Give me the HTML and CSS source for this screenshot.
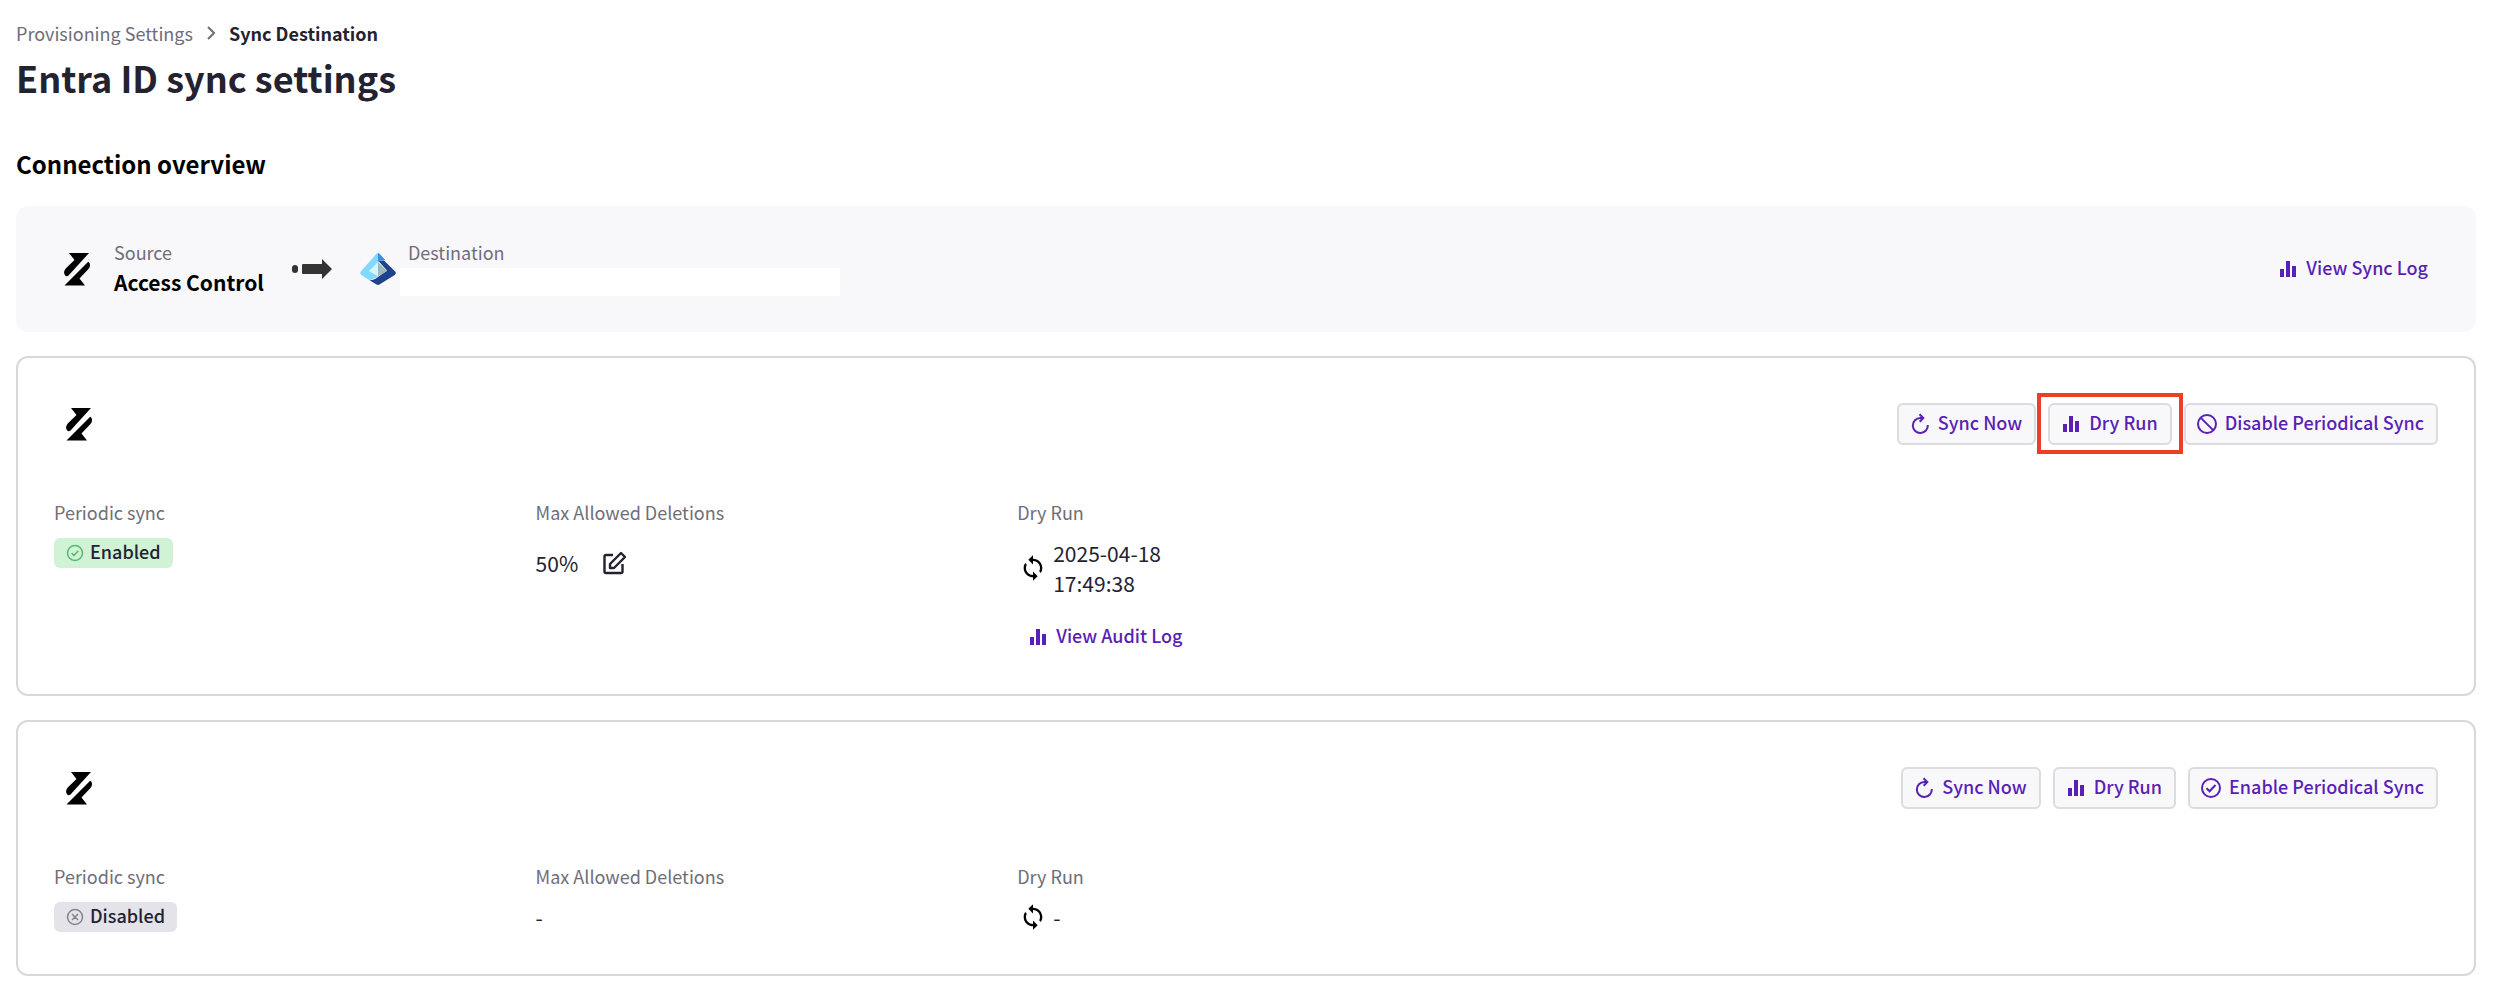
FILE: index.html
```
<!DOCTYPE html>
<html lang="en">
<head>
    <meta charset="UTF-8">
    <meta name="viewport" content="width=device-width, initial-scale=1.0">
    <title>Entra ID sync settings</title>
    <link rel="stylesheet" href="styles.css">
</head>
<body>
    <!-- Shared icons -->
    <svg class="icon-defs" aria-hidden="true">
        <symbol id="logo" viewBox="0 0 26 33">
            <path d="M5 0H25L4.500 22.500C2 25-.5 21 .2 18.500C.6 17 1.500 15.800 2.500 14.800L10.500 7Z"/>
            <path d="M24.200 8.800C25.300 9.200 26 10.500 26 12C26 13.800 25.300 15.200 24 16.500L15.500 25.500L21 32.500H.5Z"/>
        </symbol>
        <symbol id="bars" viewBox="0 0 24 24">
            <path d="M4 12h4v8H4zM10 4h4v16h-4zM16 9h4v11h-4z"/>
        </symbol>
        <symbol id="refresh" viewBox="0 0 24 24">
            <path d="M14 6H12.300A7.500 7.500 0 1 0 19.800 13" fill="none" stroke="currentColor" stroke-width="2"/>
            <path d="M11.500 2.200L15.300 6L11.700 9.800" fill="none" stroke="currentColor" stroke-width="2"/>
        </symbol>
        <symbol id="block" viewBox="0 0 24 24">
            <path d="M12 3a9 9 0 1 0 0 18a9 9 0 1 0 0-18M5.600 5.600L18.400 18.400" fill="none" stroke="currentColor" stroke-width="2"/>
        </symbol>
        <symbol id="check" viewBox="0 0 24 24">
            <path d="M12 3a9 9 0 1 0 0 18a9 9 0 1 0 0-18M7.500 12.200L10.600 15.300L16.500 9" fill="none" stroke="currentColor" stroke-width="2"/>
        </symbol>
        <symbol id="enabled" viewBox="0 0 24 24">
            <path d="M12 2a10 10 0 1 0 0 20a10 10 0 1 0 0-20M7.500 12.200L10.600 15.300L16.500 9" fill="none" stroke="currentColor" stroke-width="2"/>
        </symbol>
        <symbol id="disabled" viewBox="0 0 24 24">
            <path d="M12 2a10 10 0 1 0 0 20a10 10 0 1 0 0-20M8 8L16 16M16 8L8 16" fill="none" stroke="currentColor" stroke-width="2"/>
        </symbol>
        <symbol id="sync" viewBox="0 0 24 24">
            <path d="M12 4V1L8 5l4 4V6c3.310 0 6 2.690 6 6 0 1.010-.25 1.970-.7 2.800l1.460 1.460C19.540 15.030 20 13.570 20 12c0-4.420-3.580-8-8-8zm0 14c-3.310 0-6-2.690-6-6 0-1.010.25-1.970.7-2.800L5.240 7.740C4.460 8.970 4 10.430 4 12c0 4.420 3.580 8 8 8v3l4-4-4-4v3z"/>
        </symbol>
        <symbol id="edit" viewBox="0 0 24 24">
            <path d="M11 4H4Q2.500 4 2.500 5.500V20.500Q2.500 22 4 22H19Q20.500 22 20.500 20.500V13" fill="none" stroke="currentColor" stroke-width="2.400"/>
            <path d="M8 17V13L19 2L23 6L12 17Z" fill="none" stroke="currentColor" stroke-width="2.400" stroke-linejoin="round"/>
        </symbol>
    </svg>

    <nav class="breadcrumbs" aria-label="Breadcrumb">
        <a href="#">Provisioning Settings</a>
        <svg class="chevron" viewBox="0 0 8 14"><path d="M1 1L7 7L1 13"/></svg>
        <span class="current">Sync Destination</span>
    </nav>
    <h1>Entra ID sync settings</h1>

    <main>
        <h2>Connection overview</h2>

        <section class="overview">
            <svg class="logo"><use href="#logo"/></svg>
            <div class="field source">
                <span class="label">Source</span>
                <strong class="name">Access Control</strong>
            </div>
            <svg class="arrow" viewBox="0 0 40 20">
                <rect x="0" y="6" width="6" height="8" rx="3"/>
                <path d="M11 5H30V0L40 10L30 20V15H11Q10 15 10 14V6Q10 5 11 5Z"/>
            </svg>
            <svg class="entra" viewBox="0 0 36 32">
                <path fill="#83d9fd" d="M18 0Q17 0 16.200 1L.8 18.500Q-.6 20.500 1.300 22L9.500 27.300L18 24Z"/>
                <path fill="#1e428c" d="M24 7.500L35.200 18.500Q36.600 20.500 34.700 22L19.500 31.500Q18 32.400 16.500 31.500L9.500 27.300Q13 27.500 16 25.500L27 17.500L18 7.500Z"/>
                <path fill="#3f8fe0" d="M18 0Q19 0 19.800 1L25.500 7.200L20.500 7.200L18 9Z"/>
                <path fill="#d4f4fe" d="M18 9V23.500L9 18Z"/>
                <path fill="#9cb9bd" d="M18 9L27 18L18 23.500Z"/>
            </svg>
            <div class="field destination">
                <span class="label">Destination</span>
                <span class="redacted"></span>
            </div>
            <a href="#" class="link">
                <svg class="icon"><use href="#bars"/></svg>
                <span class="text">View Sync Log</span>
            </a>
        </section>

        <section class="card">
            <div class="card-header">
                <svg class="logo"><use href="#logo"/></svg>
                <div class="buttons">
                    <button class="button">
                        <svg class="icon"><use href="#refresh"/></svg>
                        <span class="text">Sync Now</span>
                    </button>
                    <div class="highlighted">
                        <button class="button">
                            <svg class="icon"><use href="#bars"/></svg>
                            <span class="text">Dry Run</span>
                        </button>
                    </div>
                    <button class="button">
                        <svg class="icon"><use href="#block"/></svg>
                        <span class="text">Disable Periodical Sync</span>
                    </button>
                </div>
            </div>
            <div class="details">
                <div class="detail">
                    <span class="label">Periodic sync</span>
                    <span class="badge enabled">
                        <svg><use href="#enabled"/></svg>
                        <span>Enabled</span>
                    </span>
                </div>
                <div class="detail">
                    <span class="label">Max Allowed Deletions</span>
                    <div class="value editable">
                        <span>50%</span>
                        <button class="edit" aria-label="Edit max allowed deletions">
                            <svg class="icon"><use href="#edit"/></svg>
                        </button>
                    </div>
                </div>
                <div class="detail">
                    <span class="label">Dry Run</span>
                    <div class="value run">
                        <svg class="sync"><use href="#sync"/></svg>
                        <time datetime="2025-04-18T17:49:38">2025-04-18 17:49:38</time>
                    </div>
                    <a href="#" class="link audit">
                        <svg class="icon"><use href="#bars"/></svg>
                        <span class="text">View Audit Log</span>
                    </a>
                </div>
            </div>
        </section>

        <section class="card">
            <div class="card-header">
                <svg class="logo"><use href="#logo"/></svg>
                <div class="buttons">
                    <button class="button">
                        <svg class="icon"><use href="#refresh"/></svg>
                        <span class="text">Sync Now</span>
                    </button>
                    <button class="button">
                        <svg class="icon"><use href="#bars"/></svg>
                        <span class="text">Dry Run</span>
                    </button>
                    <button class="button">
                        <svg class="icon"><use href="#check"/></svg>
                        <span class="text">Enable Periodical Sync</span>
                    </button>
                </div>
            </div>
            <div class="details">
                <div class="detail">
                    <span class="label">Periodic sync</span>
                    <span class="badge disabled">
                        <svg><use href="#disabled"/></svg>
                        <span>Disabled</span>
                    </span>
                </div>
                <div class="detail">
                    <span class="label">Max Allowed Deletions</span>
                    <div class="value">-</div>
                </div>
                <div class="detail">
                    <span class="label">Dry Run</span>
                    <div class="value run">
                        <svg class="sync"><use href="#sync"/></svg>
                        <span>-</span>
                    </div>
                </div>
            </div>
        </section>
    </main>
</body>
</html>
```
FILE: styles.css
```
* {
    box-sizing: border-box;
}

body {
    margin: 0;
    padding: 19px 24px 24px 16px;
    font-family: "Noto Sans CJK SC", "Open Sans", sans-serif;
    font-size: 18px;
    line-height: 28px;
    color: #242230;
    background-color: #fff;
}

h1, h2 {
    margin: 0;
    font-weight: bold;
}

h1 {
    margin-top: 6px;
    font-size: 36px;
    line-height: 48px;
}

h2 {
    margin: 45px 0 24px;
    font-size: 24px;
    line-height: 36px;
    color: #000;
}

a {
    text-decoration: none;
}

svg {
    flex-shrink: 0;
    fill: currentColor;
}

.icon-defs {
    display: none;
}

.icon {
    width: 24px;
    height: 24px;
}

/* Breadcrumbs */
.breadcrumbs {
    display: flex;
    align-items: center;
    gap: 14px;
}

.breadcrumbs a {
    color: #6f6d79;
}

.current {
    font-weight: bold;
}

.chevron {
    width: 8px;
    height: 14px;
    fill: none;
    stroke: #6f6d79;
    stroke-width: 2;
}

/* Connection overview */
.overview {
    display: flex;
    align-items: center;
    padding: 32px 48px;
    border-radius: 12px;
    background-color: #f8f8fb;
}

.logo {
    width: 26px;
    height: 33px;
    color: #000;
}

.label {
    color: #6f6d79;
}

.field {
    display: flex;
    flex-direction: column;
    gap: 2px;
    padding-bottom: 4px;
}

.source {
    margin: 0 28px 0 24px;
}

.name {
    font-size: 21px;
    color: #000;
}

.arrow {
    width: 40px;
    height: 20px;
    color: #333;
}

.entra {
    width: 36px;
    height: 32px;
    margin-left: 28px;
}

.destination {
    margin-left: 4px;
}

.destination .label {
    padding-left: 8px;
}

.redacted {
    width: 440px;
    height: 28px;
    background-color: #fff;
}

.link {
    display: flex;
    align-items: center;
    gap: 6px;
    font-weight: 500;
    color: #5a1fb5;
}

.overview .link {
    margin-left: auto;
}

/* Moves the caption up to sit level with its icon */
.text {
    padding-bottom: 4px;
}

/* Sync cards */
.card {
    margin-top: 24px;
    padding: 45px 36px 42px;
    border: 2px solid #d8d7de;
    border-radius: 12px;
}

.card-header {
    display: flex;
    justify-content: space-between;
    align-items: center;
    padding-left: 12px;
}

.buttons {
    display: flex;
    gap: 12px;
}

.button {
    display: flex;
    align-items: center;
    gap: 6px;
    height: 42px;
    padding: 0 12px 0 9px;
    border: 2px solid #dcdbe0;
    border-radius: 6px;
    font: inherit;
    font-weight: 500;
    color: #5a1fb5;
    background-color: #f8f8fb;
    cursor: pointer;
}

.button:hover {
    background-color: #eeedf5;
}

.highlighted {
    position: relative;
}

/* Red frame round the dry run button */
.highlighted::after {
    content: "";
    position: absolute;
    inset: -10px -11px -9px;
    border: 4px solid #eb4026;
    pointer-events: none;
}

.details {
    display: grid;
    grid-template-columns: repeat(5, 1fr);
    gap: 24px;
    margin-top: 53px;
}

.detail {
    display: flex;
    flex-direction: column;
    align-items: flex-start;
    gap: 12px;
}

.badge {
    display: flex;
    align-items: center;
    gap: 6px;
    height: 30px;
    padding: 0 12px;
    border-radius: 6px;
    font-weight: 500;
}

.badge span {
    padding-bottom: 4px;
}

.badge svg {
    width: 18px;
    height: 18px;
}

.enabled {
    background-color: #d0f3d5;
}

.enabled svg {
    color: #56b870;
}

.disabled {
    background-color: #e5e3ea;
}

.disabled svg {
    color: #85838d;
}

.value {
    font-size: 21px;
    line-height: 30px;
}

.editable {
    display: flex;
    align-items: center;
    gap: 24px;
    height: 50px;
}

.edit {
    display: flex;
    padding: 0;
    border: none;
    color: inherit;
    background: none;
    cursor: pointer;
}

.run {
    display: flex;
    align-items: center;
    gap: 6px;
    padding-left: 2px;
}

.run time {
    width: 120px;
}

.sync {
    width: 28px;
    height: 28px;
    color: #000;
}

.audit {
    height: 30px;
    margin-top: 12px;
    padding-left: 9px;
}
```
